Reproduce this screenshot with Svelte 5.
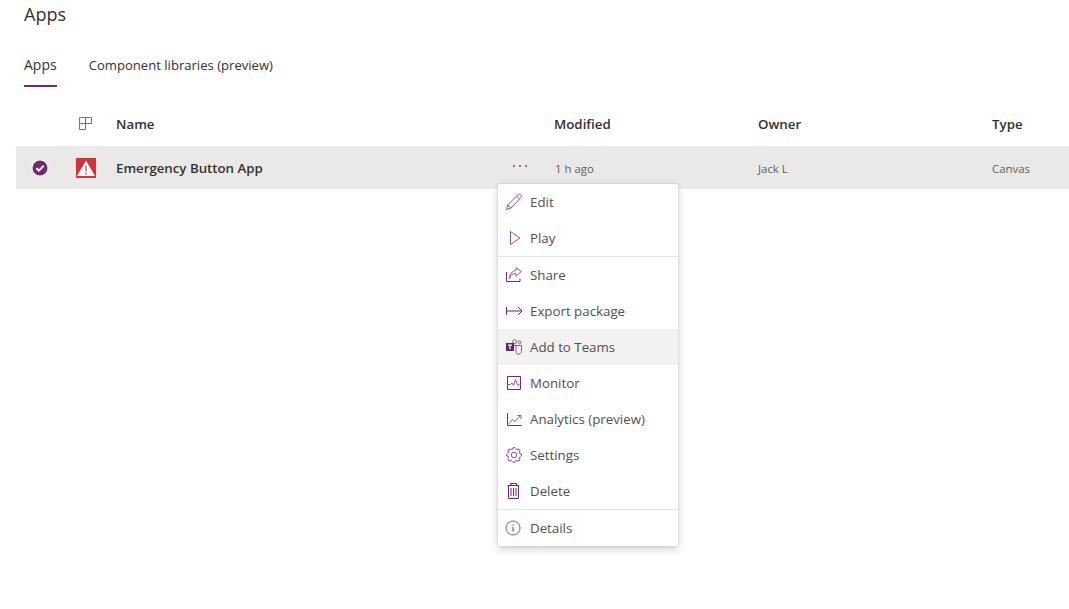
<script>
  const groups = [
    [{ label: 'Edit', icon: 'edit' }, { label: 'Play', icon: 'play' }],
    [
      { label: 'Share', icon: 'share' },
      { label: 'Export package', icon: 'export' },
      { label: 'Add to Teams', icon: 'teams', hover: true },
      { label: 'Monitor', icon: 'monitor' },
      { label: 'Analytics (preview)', icon: 'analytics' },
      { label: 'Settings', icon: 'settings' },
      { label: 'Delete', icon: 'delete' }
    ],
    [{ label: 'Details', icon: 'details' }]
  ];
  const teeth = [0, 45, 90, 135, 180, 225, 270, 315];
</script>

<main class="page">
  <h1 class="title">Apps</h1>
  <nav class="tabs">
    <span class="tab active">Apps</span>
    <span class="tab">Component libraries (preview)</span>
  </nav>

  <div class="table">
    <div class="row head">
      <span></span>
      <svg class="typeicon" width="16" height="16" viewBox="0 0 16 16" fill="none">
        <path d="M2.500 1.500h6v6h-6zM8.500 1.500h6v6h-6zM2.500 7.500h6v6h-6z" stroke="#6b777c" stroke-width="1" />
      </svg>
      <span>Name</span>
      <span></span>
      <span class="modified">Modified</span>
      <span>Owner</span>
      <span>Type</span>
    </div>
    <div class="row item">
      <svg class="check" width="18" height="18" viewBox="0 0 18 18">
        <circle cx="9" cy="9" r="8.500" fill="#fff" />
        <circle cx="9" cy="9" r="7.500" fill="#742774" />
        <path d="M5.400 9.200l2.500 2.400 4.800-4.800" fill="none" stroke="#fff" stroke-width="2" />
      </svg>
      <svg class="appicon" width="20" height="20" viewBox="0 0 20 20">
        <rect width="20" height="20" fill="#d13438" />
        <path d="M10 2.600L19 18H1z" fill="#fff" />
        <rect x="9" y="7.500" width="2" height="6" fill="#d98e90" />
        <rect x="9" y="14.600" width="2" height="2" fill="#d98e90" />
      </svg>
      <span class="name">Emergency Button App</span>
      <span class="dots">
        <i></i><i></i><i></i>
      </span>
      <span class="cell">1 h ago</span>
      <span class="cell">Jack L</span>
      <span class="cell">Canvas</span>
    </div>
  </div>

  <div class="menu">
    {#each groups as group, g}
      {#if g > 0}<div class="divider"></div>{/if}
      {#each group as entry}
        <div class="entry" class:hover={entry.hover}>
          <svg class="ico" width="18" height="18" viewBox="0 0 18 18" fill="none" stroke="#9b4f96" stroke-width="1">
            {#if entry.icon === 'edit'}
              <path d="M1.500 16.500l1.300-4.600L12.900 1.800c.8-.8 2.200-.8 3 0s.7 2 0 2.800L5.800 15.200zM2.800 11.900l3 3.300M11.600 3.200l3.100 3" />
            {:else if entry.icon === 'play'}
              <path d="M5.500 2.500v13L15 9z" />
            {:else if entry.icon === 'share'}
              <path d="M1.500 6v9.500h13.500v-3" stroke="#742774" />
              <path d="M4.500 13c.2-3.400 2.600-5.500 6.500-5.500v2.800L16.300 5.500 11 1.800v2.700C7 4.700 4.500 8.300 4.500 13z" />
            {:else if entry.icon === 'export'}
              <path d="M1.500 5v8M1.500 9H17M13 5l4 4-4 4" stroke="#742774" />
            {:else if entry.icon === 'teams'}
              <circle cx="9.500" cy="3.700" r="1.900" />
              <circle cx="14.500" cy="4.300" r="1.500" />
              <path d="M5.700 7.500h5.300v6c0 1.700 .6 2.800 2 2.800s3.500-1.100 3.500-3V7.500H11" />
              <rect x="1" y="5" width="8" height="8" fill="#5b2a5e" stroke="none" />
              <path d="M3 7.200h4M5 7.200v4" stroke="#fff" stroke-width="1.200" />
            {:else if entry.icon === 'monitor'}
              <path d="M2.500 2.500h13v13h-13z" stroke="#742774" />
              <path d="M2.500 10.500h3l1.500-1.500 1.500 2.500 2-6 2 5.500h2.500" />
            {:else if entry.icon === 'analytics'}
              <path d="M2.500 3v12.500H16.500" stroke="#742774" />
              <path d="M4 13.500l3.500-4 2.500 2 5.500-6M12.500 5.500H16V9" />
            {:else if entry.icon === 'settings'}
              {#each teeth as t}
                <path d="M7.300 2.600c.3-1.500 3.100-1.500 3.400 0" transform="rotate({t} 9 9)" />
                <path d="M10.700 2.600c.2 .6 .5 .9 1.400 1.300" transform="rotate({t} 9 9)" />
                <path d="M12.100 3.900c.8-.1 1.100-.3 1.100-.3" transform="rotate({t} 9 9)" />
              {/each}
              <circle cx="9" cy="9" r="2.700" />
            {:else if entry.icon === 'delete'}
              <path d="M2.500 3.500h11.500M5.500 3.500v-2h6v2M3.500 3.500v13h10v-13M6 6v8M8.500 6v8M11 6v8" stroke="#742774" />
            {:else if entry.icon === 'details'}
              <circle cx="8" cy="9" r="7" />
              <path d="M8 8v4.500M8 5.500v1.200" stroke="#742774" />
            {/if}
          </svg>
          <span>{entry.label}</span>
        </div>
      {/each}
    {/each}
  </div>
</main>

<style>
  :global(body) {
    margin: 0;
    background: #fff;
    font-family: "Open Sans", "Noto Sans", sans-serif;
    color: #323130;
  }
  .page {
    position: relative;
    height: 609px;
    overflow: hidden;
  }
  .title {
    margin: 0;
    padding: 3px 0 0 24px;
    font-size: 18px;
    line-height: 22px;
    font-weight: 500;
    color: #323130;
  }
  .tabs {
    display: flex;
    gap: 32px;
    margin: 22px 0 0 24px;
    font-size: 13.100px;
  }
  .tab {
    height: 38px;
    line-height: 36px;
    border-bottom: 2px solid transparent;
    white-space: nowrap;
  }
  .tab.active {
    font-size: 14px;
    font-weight: 500;
    border-bottom-color: #742774;
  }
  .table {
    margin: 15px 0 0 16px;
  }
  .row {
    display: grid;
    grid-template-columns: 60px 40px 380px 59px 203px 234px 1fr;
    align-items: center;
  }
  .head {
    height: 44px;
    font-size: 13.300px;
    font-weight: 600;
  }
  .modified {
    margin-left: -1px;
  }
  .item {
    height: 43px;
    background: #ebe9e8;
  }
  .check {
    margin-left: 15px;
  }
  .typeicon {
    margin-left: 1px;
  }
  .name {
    padding-top: 1px;
    font-size: 13.250px;
    font-weight: 600;
  }
  .dots {
    display: flex;
    gap: 4px;
    padding-left: 17px;
    padding-bottom: 3px;
  }
  .dots i {
    width: 2px;
    height: 2px;
    background: #9b6a9b;
  }
  .cell {
    padding-top: 1px;
    font-size: 11.400px;
    color: #605e5c;
  }
  .menu {
    position: absolute;
    left: 498px;
    top: 184px;
    width: 180px;
    background: #fff;
    border-radius: 2px;
    box-shadow: 0 3px 8px rgba(0, 0, 0, 0.2), 0 0 3px rgba(0, 0, 0, 0.1);
  }
  .divider {
    height: 1px;
    background: #e8e6e5;
  }
  .entry {
    display: flex;
    align-items: center;
    gap: 7px;
    height: 36px;
    padding-left: 7px;
    font-size: 13.300px;
    color: #505050;
  }
  .entry.hover {
    background: #f3f2f1;
  }
</style>
